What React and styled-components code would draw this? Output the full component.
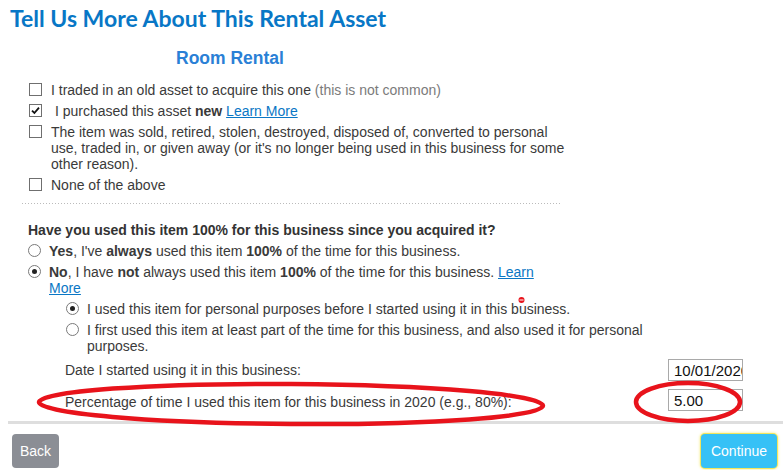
import React from 'react'
import styled, { createGlobalStyle } from 'styled-components'

const GlobalStyle = createGlobalStyle`
  body {
    margin: 0;
    background: #fff;
    font-family: "Liberation Sans", Arial, sans-serif;
    color: #3a3a3a;
  }
`

const Page = styled.div`
  position: relative;
  width: 783px;
  height: 470px;
  overflow: hidden;
`

const Title = styled.h1`
  margin: 0;
  padding: 4px 0 0 10px;
  font-family: Lato, "Noto Sans", sans-serif;
  font-weight: 700;
  font-size: 23px;
  line-height: 28px;
  color: #0877c6;
`

const Subtitle = styled.h2`
  width: 460px;
  margin: 16px 0 14px;
  text-align: center;
  font-size: 17.5px;
  line-height: 20px;
  font-weight: 700;
  color: #2a80d6;
`

const CheckList = styled.div`
  padding: 0 0 5px 29px;
`

const CheckRow = styled.label`
  display: flex;
  align-items: flex-start;
  gap: 9px;
  margin-bottom: 5px;
  font-size: 14px;
  line-height: 16px;
`

const RowText = styled.span`
  max-width: ${p => p.$width}px;
`

const Muted = styled.span`
  color: #7b7b7b;
`

const Box = styled.span`
  flex-shrink: 0;
  width: 11px;
  height: 11px;
  margin-top: 1px;
  border: 1px solid #6f6f6f;
  background: #fff;
  display: flex;
  align-items: center;
  justify-content: center;
`

const Link = styled.a`
  color: #0a77c5;
  text-decoration: underline;
`

// 1px dots, one every 3px
const DottedRule = styled.div`
  margin-left: 22px;
  width: 540px;
  height: 1px;
  background: repeating-linear-gradient(to right, #bbb 0 1px, transparent 1px 3px);
`

const Question = styled.div`
  margin: 18px 0 5px 28px;
  font-size: 14px;
  line-height: 16px;
  font-weight: 700;
  color: #333;
`

const RadioRow = styled.label`
  display: flex;
  align-items: flex-start;
  gap: 8px;
  margin: 0 0 5px ${p => p.$indent}px;
  font-size: 14px;
  line-height: 16px;
`

const Radio = styled.span`
  flex-shrink: 0;
  box-sizing: border-box;
  width: 13px;
  height: 13px;
  margin-top: 1px;
  border: 1px solid #7a7a7a;
  border-radius: 50%;
  display: flex;
  align-items: center;
  justify-content: center;

  &::after {
    content: '';
    display: ${p => (p.$checked ? 'block' : 'none')};
    width: 5px;
    height: 5px;
    border-radius: 50%;
    background: #222;
  }
`

const Fields = styled.div`
  margin: 1px 0 0 65px;
  width: 678px;
  display: flex;
  flex-direction: column;
  gap: 8px;
`

const FieldRow = styled.div`
  display: flex;
  align-items: center;
  justify-content: space-between;
  height: 22px;
  font-size: 14px;
`

const FieldLabel = styled.span`
  padding-top: ${p => (p.$low ? 3 : 0)}px;
`

const TextInput = styled.input`
  box-sizing: border-box;
  width: 75px;
  height: 22px;
  padding: 0 0 0 5px;
  border: 1px solid #a9a9a9;
  font-family: "Liberation Sans", Arial, sans-serif;
  font-size: 15px;
  color: #111;
  background: #fff;
  outline: none;
`

const Rule = styled.div`
  margin: 10px 0 0 8px;
  height: 3px;
  background: #dedede;
`

const Footer = styled.div`
  display: flex;
  justify-content: space-between;
  padding: 10px 6px 0 12px;
`

const Button = styled.button`
  height: 34px;
  padding: 0 ${p => (p.$primary ? 10 : 8)}px;
  border: none;
  border-radius: 4px;
  font-family: "Liberation Sans", Arial, sans-serif;
  font-size: 14px;
  color: #fff;
  background: ${p => (p.$primary ? '#36c1f6' : '#8b8e95')};
  box-shadow: ${p => (p.$primary ? '0 0 0 1px #f2e55c, 0 0 3px 1px #f4ea7a' : 'none')};
  cursor: pointer;
`

const Markup = styled.svg`
  position: absolute;
  inset: 0;
  pointer-events: none;
`

const Check = () => (
  <svg width="11" height="11" viewBox="0 0 11 11">
    <path d="M2 5.6 L4.4 8 L9 2.6" fill="none" stroke="#111" strokeWidth="1.8" />
  </svg>
)

const assetOptions = [
  { key: 'traded', checked: false, text: <>I traded in an old asset to acquire this one <Muted>(this is not common)</Muted></> },
  { key: 'new', checked: true, text: <>{'\u00a0'}I purchased this asset <b>new</b> <Link href="#">Learn More</Link></> },
  { key: 'gone', checked: false, text: <>The item was sold, retired, stolen, destroyed, disposed of, converted to personal use, traded in, or given away (or it's no longer being used in this business for some other reason).</> },
  { key: 'none', checked: false, text: <>None of the above</> }
]

export default function App() {
  return (
    <Page>
      <GlobalStyle />
      <Title>Tell Us More About This Rental Asset</Title>
      <Subtitle>Room Rental</Subtitle>

      <CheckList>
        {assetOptions.map(opt => (
          <CheckRow key={opt.key}>
            <Box>{opt.checked && <Check />}</Box>
            <RowText $width={515}>{opt.text}</RowText>
          </CheckRow>
        ))}
      </CheckList>

      <DottedRule />

      <Question>Have you used this item 100% for this business since you acquired it?</Question>
      <RadioRow $indent={28}>
        <Radio />
        <RowText $width={495}><b>Yes</b>, I've <b>always</b> used this item <b>100%</b> of the time for this business.</RowText>
      </RadioRow>
      <RadioRow $indent={28}>
        <Radio $checked />
        <RowText $width={495}><b>No</b>, I have <b>not</b> always used this item <b>100%</b> of the time for this business. <Link href="#">Learn More</Link></RowText>
      </RadioRow>
      <RadioRow $indent={66}>
        <Radio $checked />
        <RowText $width={570}>I used this item for personal purposes before I started using it in this business.</RowText>
      </RadioRow>
      <RadioRow $indent={66}>
        <Radio />
        <RowText $width={570}>I first used this item at least part of the time for this business, and also used it for personal purposes.</RowText>
      </RadioRow>

      <Fields>
        <FieldRow>
          <FieldLabel>Date I started using it in this business:</FieldLabel>
          <TextInput defaultValue="10/01/2020" />
        </FieldRow>
        <FieldRow>
          <FieldLabel $low>Percentage of time I used this item for this business in 2020 (e.g., 80%):</FieldLabel>
          <TextInput defaultValue="5.00" />
        </FieldRow>
      </Fields>

      <Rule />

      <Footer>
        <Button>Back</Button>
        <Button $primary>Continue</Button>
      </Footer>

      {/* red pen marks */}
      <Markup width="783" height="470" viewBox="0 0 783 470">
        <ellipse cx="291" cy="404" rx="252" ry="20" fill="none" stroke="#e8131b" strokeWidth="4.5" transform="rotate(0.4 291 404)" />
        <ellipse cx="688" cy="402" rx="52" ry="19" fill="none" stroke="#e8131b" strokeWidth="4.5" />
        <circle cx="521.5" cy="300" r="3" fill="#e8131b" />
        <rect x="519.5" y="299.5" width="4" height="1" fill="#fff" />
      </Markup>
    </Page>
  )
}
